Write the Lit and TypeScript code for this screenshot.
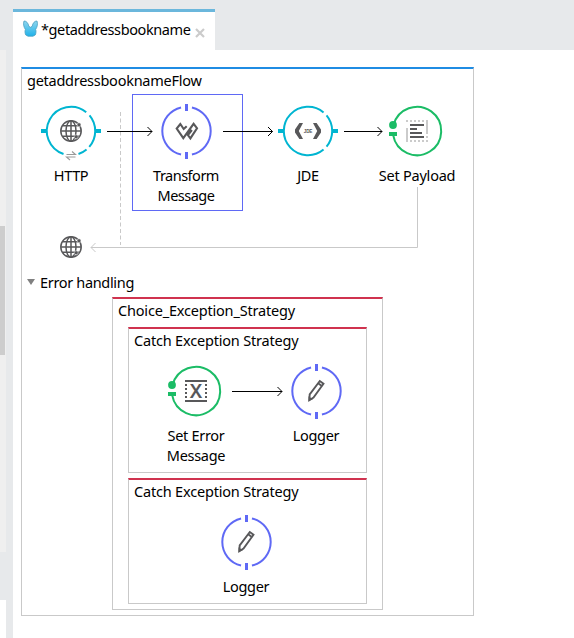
import { LitElement, html, svg, css } from "lit";
import { customElement, property } from "lit/decorators.js";

type Kind = "http" | "transform" | "connector" | "payload" | "error" | "logger";

const globe = (cx: number, cy: number) => svg`
  <g transform="translate(${cx} ${cy})" fill="none" stroke="#58585a" stroke-width="1.5">
    <circle r="10.2" />
    <ellipse rx="5" ry="10.2" />
    <path d="M0 -10V10M-10 0H10M-8.6 -5.2H8.6M-8.6 5.2H8.6" />
    <g fill="#58585a" stroke="#fff" stroke-width=".5">
      <circle cx="8" cy="-6.2" r="2" /><circle cx="5.2" cy="5.8" r="2" />
    </g>
  </g>`;

const point = (deg: number, r = 24.2) => {
  const a = (deg * Math.PI) / 180;
  return `${(r * Math.cos(a)).toFixed(2)} ${(r * Math.sin(a)).toFixed(2)}`;
};

/* Clockwise arc between two angles, in degrees from the positive x axis. */
const arc = (from: number, to: number) =>
  svg`<path d="M${point(from)}A24.2 24.2 0 ${to - from > 180 ? 1 : 0} 1 ${point(to)}" />`;

const rings: Record<Kind, { color: string; arcs: number[][] }> = {
  http: { color: "#00b5d1", arcs: [[108, 309], [320, 401], [50, 72]] },
  transform: { color: "#5f69f5", arcs: [[-77, 77], [103, 257]] },
  connector: { color: "#00b5d1", arcs: [[50, 310], [-40, 40]] },
  payload: { color: "#1bbc66", arcs: [[-166, 170]] },
  error: { color: "#1bbc66", arcs: [[-166, 170]] },
  logger: { color: "#5f69f5", arcs: [[-77, 77], [103, 257]] },
};

const ports = (kind: Kind) => {
  switch (kind) {
    case "http":
    case "connector":
      return svg`<path d="M-30 -2h6v4h-6zM24 -2h6v4h-6z" />`;
    case "transform":
    case "logger":
      return svg`<path d="M-1.5 -27h3v7h-3zM-1.5 21h3v7h-3z" />`;
    default:
      return svg`<circle cx="-24" cy="-6" r="3.9" /><path d="M-28 1h8v4h-8z" />`;
  }
};

const glyph = (kind: Kind) => {
  switch (kind) {
    case "http":
      return svg`${globe(0, 0)}
        <path d="M-4.5 23.5H4.5L1 20.5M4.5 26H-4.5L-1 29" fill="none" stroke="#999" stroke-width="1.1" />`;
    case "transform":
      return svg`<path d="M0.2 -4.8L-2.8 -2L-6.2 -7L-9.8 -2.5L-3.2 7.2L7.1 -7.2L10.5 -2.8L3.9 7.4L1.4 4L5.4 -1"
        fill="none" stroke="#58585a" stroke-width="2.1" />`;
    case "connector":
      return svg`<g fill="#58585a">
        <path d="M-5 -8H-8.600L-13 -1.600V1.600L-8.600 8H-5L-9.200 0ZM5 -8H8.600L13 -1.600V1.600L8.600 8H5L9.200 0Z" />
        <text class="mini" x="0" y="1.6">JDE</text></g>`;
    case "payload":
      return svg`
        <path d="M-11 -10H7M-11 10H11" stroke="#cbcbcb" stroke-width="2" stroke-dasharray="2 2" />
        <path d="M-10 -3V11M10 -11V3" stroke="#cbcbcb" stroke-width="2" />
        <path d="M10 5v2" stroke="#cbcbcb" stroke-width="2" />
        <path d="M-7 -6H7M-7 -2H0M-7 2H5M-7 6H7" stroke="#58585a" stroke-width="2" />`;
    case "error":
      return svg`
        <path d="M-11 -10H11M-11 10H11" stroke="#58585a" stroke-width="2" />
        <path d="M-10 -9V9M10 -9V9" stroke="#58585a" stroke-width="2" stroke-dasharray="2 2" stroke-dashoffset="2" />
        <text class="cross" x="0" y="7" fill="#58585a">X</text>`;
    case "logger":
      return svg`<g fill="none" stroke="#58585a" stroke-width="1.9">
        <path d="M-7.2 9.2L-6.8 3.4L3.3 -10L7 -7.2L-3 6.6Z" />
        <path d="M1.6 -7.8L5.4 -5" /></g>
        <path d="M-8 10V5.200L-3.600 8.200Z" fill="#58585a" />`;
  }
};

@customElement("flow-node")
class FlowNode extends LitElement {
  @property() kind: Kind = "http";
  @property({ type: Array }) lines: string[] = [];

  static styles = css`
    :host { position: absolute; width: 110px; display: flex; flex-direction: column; align-items: center; }
    .icon { width: 60px; height: 60px; display: block; }
    .label { margin-top: 4px; text-align: center; line-height: 20px; white-space: nowrap; }
    .mini { font: bold 4.6px "Liberation Sans", sans-serif; letter-spacing: -0.2px; text-anchor: middle; }
    .cross { font: 600 19.5px "Noto Sans", sans-serif; letter-spacing: 0; text-anchor: middle; }
  `;

  render() {
    const ring = rings[this.kind];
    /* The 3px vertical ports sit on whole pixels when the centre is at a half pixel. */
    const shift = this.kind === "transform" || this.kind === "logger" ? -30.5 : -30;
    return html`
      <svg class="icon" viewBox="${shift} -30 60 60">
        <g fill="none" stroke=${ring.color} stroke-width="2">
          ${ring.arcs.map(([a, b]) => arc(a, b))}
        </g>
        <g fill=${ring.color}>${ports(this.kind)}</g>
        ${glyph(this.kind)}
      </svg>
      <div class="label">${this.lines.map((l) => html`<div>${l}</div>`)}</div>
    `;
  }
}

const arrow = (x1: number, x2: number, y: number) =>
  svg`<path d="M${x1} ${y}H${x2}M${x2 - 4.5} ${y - 4.5}L${x2} ${y}L${x2 - 4.5} ${y + 4.5}" />`;

@customElement("app-root")
class AppRoot extends LitElement {
  static styles = css`
    :host {
      display: flex; width: 574px; height: 638px; overflow: hidden; background: #e7e9eb;
      font: 14.5px "Noto Sans", "Open Sans", sans-serif; color: #000; letter-spacing: -0.35px;
    }
    * { box-sizing: border-box; }
    .side { width: 6px; margin-right: 7px; padding-top: 50px; display: flex; flex-direction: column; flex: none; }
    .track { height: 502px; padding-top: 176px; background: #efefef; }
    .thumb { width: 5px; height: 129px; background: #cdcdcd; }
    .below { margin-top: 48px; flex: 1; background: #fff; }
    .main { flex: 1; padding-top: 9px; display: flex; flex-direction: column; }
    .tab {
      width: 202px; height: 41px; background: #fff; border-top: 3px solid #6bb7dc;
      display: flex; align-items: flex-start; padding: 8px 0 0 10px;
    }
    .logo { width: 15px; height: 17px; flex: none; }
    .name { margin: -1px 0 0 3px; line-height: 20px; width: 150px; white-space: nowrap; letter-spacing: -0.4px; }
    .close { width: 10px; height: 10px; margin: 8px 0 0 4px; flex: none; }
    .editor { flex: 1; background: #fff; padding: 17px 0 0 8px; }
    .frame { border: 1px solid #c9c9c9; border-top: 2px solid #d0334f; position: relative; }
    .title { height: 22px; line-height: 20px; padding: 1px 0 0 5px; white-space: nowrap; letter-spacing: -0.19px; }
    .flow { width: 453px; height: 549px; border-top-color: #1f8ce3; }
    .t-flow { letter-spacing: -0.26px; }
    .process { position: relative; height: 182px; }
    .wires { position: absolute; inset: 0; width: 100%; height: 100%; overflow: visible; }
    .selection { position: absolute; left: 110px; top: 3px; width: 111px; height: 117px; border: 1px solid #5f69f5; }
    .section { display: flex; align-items: center; height: 20px; padding-left: 5px; }
    .section span { line-height: 20px; margin-top: -2px; letter-spacing: -0.33px; }
    .twisty { width: 8px; height: 6px; margin: -2px 5px 0 0; }
    .choice { width: 271px; height: 313px; margin: 4px 0 0 90px; }
    .catch { width: 239px; margin: 6px 0 0 15px; }
    .catch + .catch { margin-top: 5px; }
    .tall { height: 146px; }
    .short { height: 126px; }
    .n-http { left: -6px; top: 10px; }
    .n-transform { left: 109px; top: 10px; letter-spacing: -0.5px; }
    .n-jde { left: 231px; top: 10px; }
    .n-payload { left: 340px; top: 10px; letter-spacing: -0.22px; }
    .n-error { left: 12px; top: 32px; letter-spacing: -0.3px; }
    .n-logger { left: 132px; top: 32px; }
    .n-logger-alone { left: 62px; top: 32px; }
  `;

  render() {
    return html`
      <div class="side">
        <div class="track"><div class="thumb"></div></div>
        <div class="below"></div>
      </div>
      <div class="main">
        <div class="tab">
          <svg class="logo" viewBox="0 0 15 17">
            <defs><linearGradient id="g" x1="0" y1="0" x2="0" y2="1">
              <stop offset="0" stop-color="#8fd6ee" /><stop offset="1" stop-color="#1fb2ea" />
            </linearGradient></defs>
            <path d="M1 1C3.500 1 5.200 3 5.800 6.300L7.500 7.300L9.200 6.300C9.800 3 11.500 1 14 1C15 4 14.300 7 12.600 9.500C13.400 11 12.900 14 12.200 15L10 16.200H5L2.800 15C2.100 14 1.600 11 2.400 9.500C.700 7 0 4 1 1Z"
              fill="url(#g)" stroke="#4a9fc0" stroke-width=".8" />
          </svg>
          <div class="name">*getaddressbookname</div>
          <svg class="close" viewBox="0 0 10 10"><path d="M1 1L9 9M9 1L1 9" stroke="#cbcbcb" stroke-width="2.2" /></svg>
        </div>
        <div class="editor">
          <div class="frame flow">
            <div class="title t-flow">getaddressbooknameFlow</div>
            <div class="process">
              <div class="selection"></div>
              <svg class="wires" fill="none">
                <path d="M98.5 21V154" stroke="#c9c9c9" stroke-dasharray="4 2.5" />
                <path d="M395.5 96V156.500H69M73.500 152L69 156.500L73.500 161" stroke="#c9c9c9" />
                <g stroke="#000">${arrow(85, 130, 40.5)}${arrow(201, 250.5, 40.5)}${arrow(322, 360, 40.5)}</g>
                ${globe(49, 156)}
              </svg>
              <flow-node class="n-http" kind="http" .lines=${["HTTP"]}></flow-node>
              <flow-node class="n-transform" kind="transform" .lines=${["Transform", "Message"]}></flow-node>
              <flow-node class="n-jde" kind="connector" .lines=${["JDE"]}></flow-node>
              <flow-node class="n-payload" kind="payload" .lines=${["Set Payload"]}></flow-node>
            </div>
            <div class="section">
              <svg class="twisty" viewBox="0 0 8 6"><path d="M0 0H8L4 6Z" fill="#808080" /></svg>
              <span>Error handling</span>
            </div>
            <div class="frame choice">
              <div class="title">Choice_Exception_Strategy</div>
              <div class="frame catch tall">
                <div class="title">Catch Exception Strategy</div>
                <svg class="wires" fill="none"><g stroke="#000">${arrow(103, 153, 62.5)}</g></svg>
                <flow-node class="n-error" kind="error" .lines=${["Set Error", "Message"]}></flow-node>
                <flow-node class="n-logger" kind="logger" .lines=${["Logger"]}></flow-node>
              </div>
              <div class="frame catch short">
                <div class="title">Catch Exception Strategy</div>
                <flow-node class="n-logger-alone" kind="logger" .lines=${["Logger"]}></flow-node>
              </div>
            </div>
          </div>
        </div>
      </div>
    `;
  }
}
